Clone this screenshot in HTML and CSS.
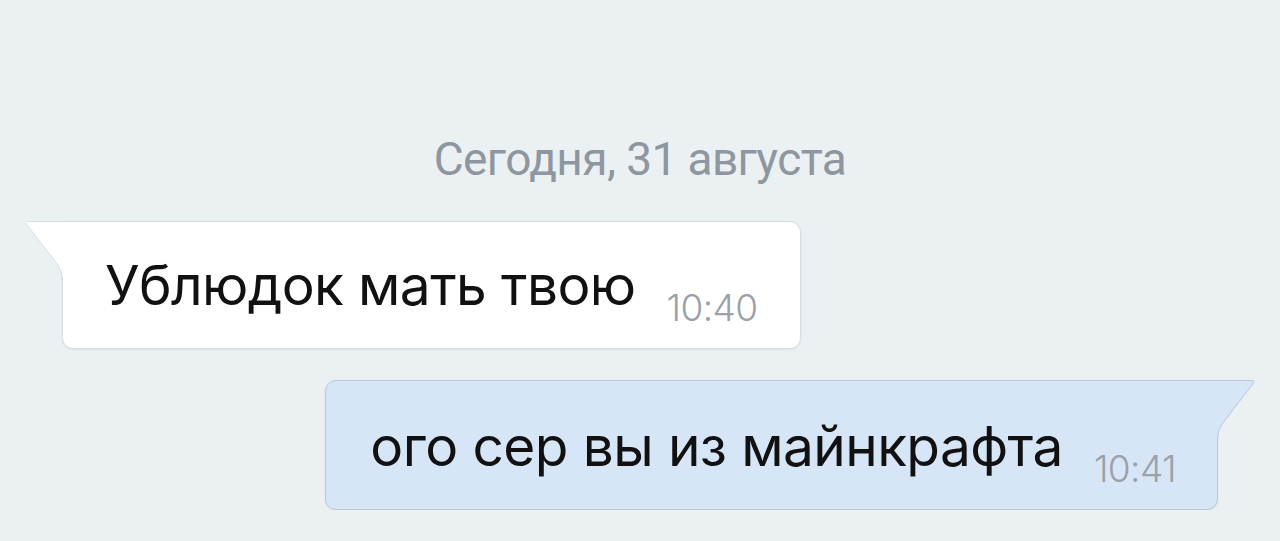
FILE: index.html
```html
<!DOCTYPE html>
<html lang="ru">
<head>
    <meta charset="UTF-8">
    <meta name="viewport" content="width=device-width, initial-scale=1.0">
    <title>Чат</title>
    <link rel="stylesheet" href="styles.css">
</head>
<body>
    <div class="chat">
        <div class="date">Сегодня, 31 августа</div>

        <div class="msg msg-in">
            <svg class="tail" width="42" height="64" viewBox="0 0 42 64">
                <path class="tail-fill" d="M42 0 L4 0 Q0 0.5 2.5 3.5 L33 43 Q38.5 50 38.5 58 L38.5 64 L42 64 Z"/>
                <path class="tail-line" d="M42 0.5 L4 0.5 Q0.8 0.8 3 3.8 L33.2 43 Q38.5 50 38.5 58 L38.5 64"/>
            </svg>
            <span class="text">Ублюдок мать твою</span>
            <span class="time">10:40</span>
        </div>

        <div class="msg msg-out">
            <svg class="tail" width="42" height="64" viewBox="0 0 42 64">
                <path class="tail-fill" d="M42 0 L4 0 Q0 0.5 2.5 3.5 L33 43 Q38.5 50 38.5 58 L38.5 64 L42 64 Z"/>
                <path class="tail-line" d="M42 0.5 L4 0.5 Q0.8 0.8 3 3.8 L33.2 43 Q38.5 50 38.5 58 L38.5 64"/>
            </svg>
            <span class="text">ого сер вы из майнкрафта</span>
            <span class="time">10:41</span>
        </div>
    </div>
</body>
</html>
```

FILE: styles.css
```css
body {
    margin: 0;
    background: #ebf0f3;
    font-family: Inter, "Noto Sans", sans-serif;
}

.chat {
    display: flex;
    flex-direction: column;
    padding: 135px 62px 0 62px;
}

.date {
    align-self: center;
    font-family: Roboto, "Liberation Sans", sans-serif;
    font-size: 46px;
    line-height: 48px;
    color: #8e979f;
    letter-spacing: -0.6px;
    margin-bottom: 38px;
}

.msg {
    position: relative;
    display: flex;
    align-items: flex-end;
    gap: 31px;
    border: 1px solid #d8dde2;
    border-radius: 0 11px 11px 11px;
    background: #fff;
    box-shadow: 0 1px 2px rgba(40, 60, 80, 0.08);
    padding: 31px 42px 20px 42px;
}

.msg-in {
    align-self: flex-start;
}

.msg-out {
    align-self: flex-end;
    margin-top: 31px;
    padding: 33px 41px 20px 44px;
    background: #d6e6f7;
    border-color: #b9c9da;
    border-radius: 11px 0 11px 11px;
}

.text {
    font-size: 55px;
    line-height: 64px;
    color: #111;
    letter-spacing: -0.6px;
    margin-bottom: 11px;
}

.time {
    font-size: 37px;
    line-height: 40px;
    font-weight: 300;
    color: #9ba1a7;
    letter-spacing: -0.6px;
}

.tail {
    position: absolute;
    top: -1px;
    left: -39px;
}

.msg-out .tail {
    left: auto;
    right: -39px;
    transform: scaleX(-1);
}

.tail-fill {
    fill: #fff;
}

.tail-line {
    fill: none;
    stroke: #d8dde2;
    stroke-width: 1;
}

.msg-out .tail-fill {
    fill: #d6e6f7;
}

.msg-out .tail-line {
    stroke: #b9c9da;
}
```
